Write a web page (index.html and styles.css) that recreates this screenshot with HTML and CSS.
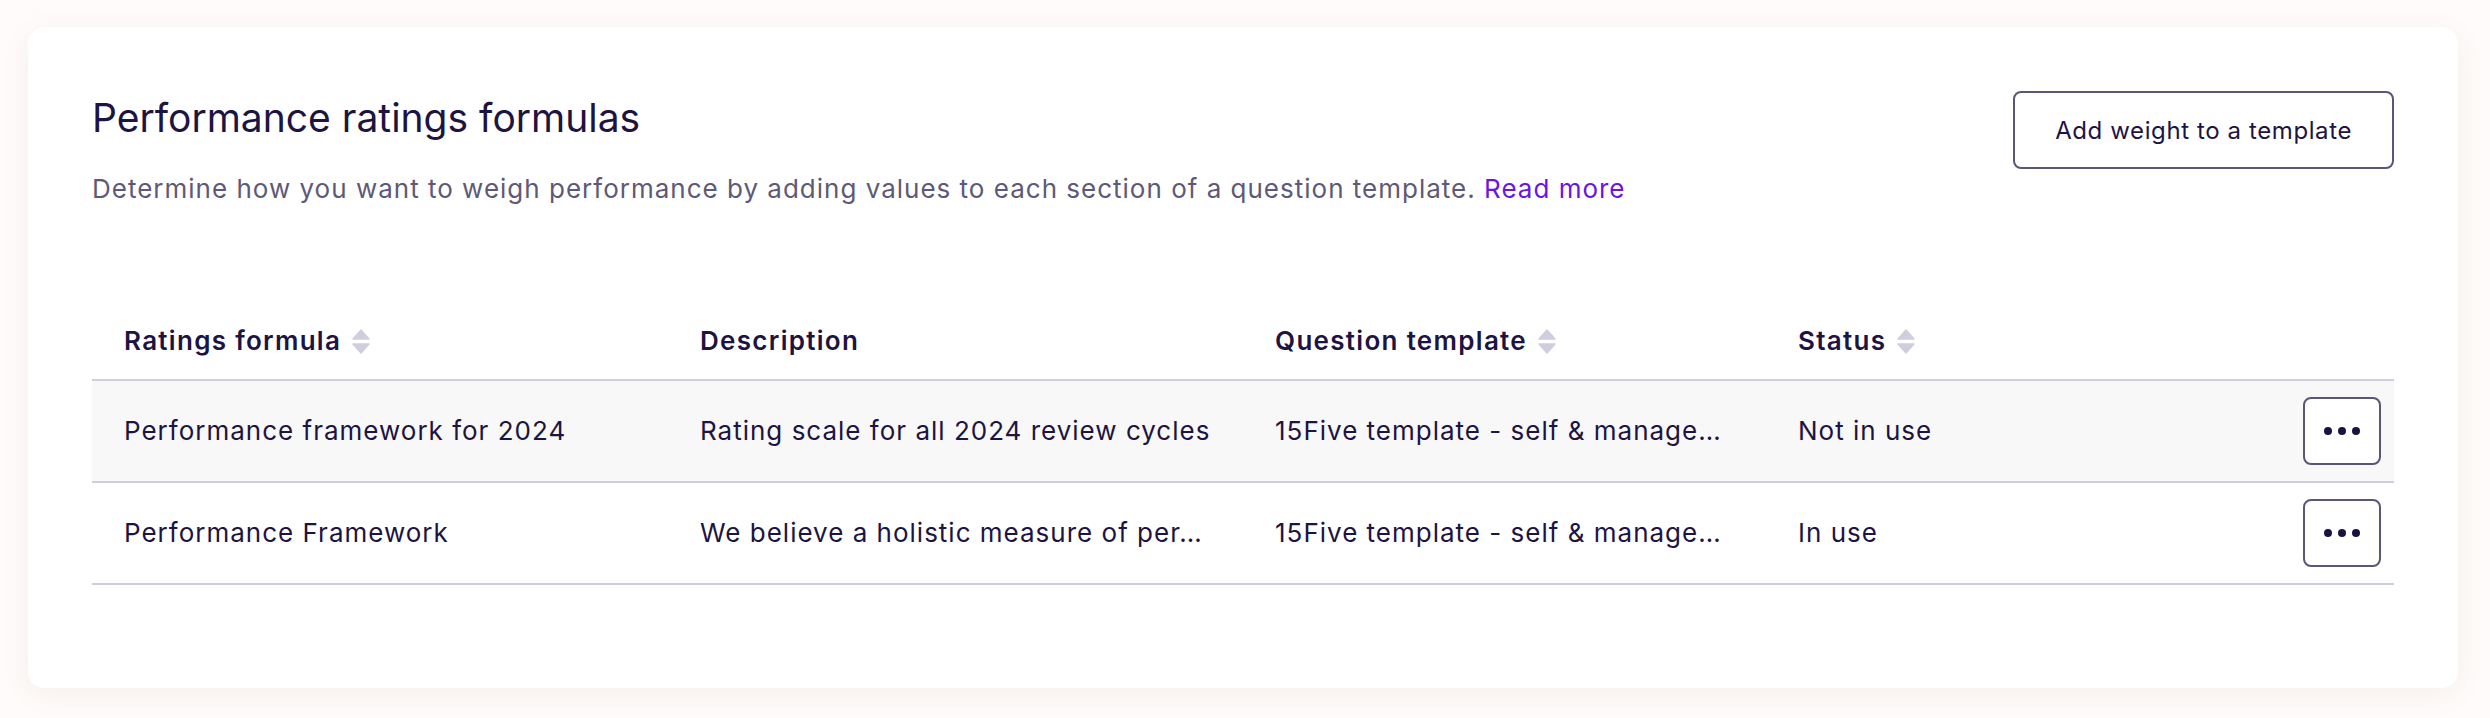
FILE: index.html
```html
<!DOCTYPE html>
<html lang="en">
<head>
    <meta charset="UTF-8">
    <meta name="viewport" content="width=device-width, initial-scale=1.0">
    <title>Performance ratings formulas</title>
    <link rel="stylesheet" href="styles.css">
</head>
<body>
    <div class="card">
        <div class="card-head">
            <div>
                <h1>Performance ratings formulas</h1>
                <p class="intro">Determine how you want to weigh performance by adding values to each section of a question template. <a href="#">Read more</a></p>
            </div>
            <button class="btn-outline">Add weight to a template</button>
        </div>

        <table class="formulas">
            <colgroup>
                <col class="col-name">
                <col class="col-desc">
                <col class="col-template">
                <col class="col-status">
                <col class="col-actions">
            </colgroup>
            <thead>
                <tr>
                    <th>Ratings formula <svg class="sort" width="18" height="25" viewBox="0 0 18 25"><path d="M9 1 L17 10 H1 Z"/><path d="M1 15 H17 L9 24 Z"/></svg></th>
                    <th>Description</th>
                    <th>Question template <svg class="sort" width="18" height="25" viewBox="0 0 18 25"><path d="M9 1 L17 10 H1 Z"/><path d="M1 15 H17 L9 24 Z"/></svg></th>
                    <th>Status <svg class="sort" width="18" height="25" viewBox="0 0 18 25"><path d="M9 1 L17 10 H1 Z"/><path d="M1 15 H17 L9 24 Z"/></svg></th>
                    <th></th>
                </tr>
            </thead>
            <tbody>
                <tr class="shaded">
                    <td>Performance framework for 2024</td>
                    <td>Rating scale for all 2024 review cycles</td>
                    <td>15Five template - self &amp; manage…</td>
                    <td>Not in use</td>
                    <td class="actions">
                        <button class="btn-more" aria-label="More">
                            <svg width="38" height="10" viewBox="0 0 38 10"><circle cx="5" cy="5" r="4"/><circle cx="19" cy="5" r="4"/><circle cx="33" cy="5" r="4"/></svg>
                        </button>
                    </td>
                </tr>
                <tr>
                    <td>Performance Framework</td>
                    <td>We believe a holistic measure of per…</td>
                    <td>15Five template - self &amp; manage…</td>
                    <td>In use</td>
                    <td class="actions">
                        <button class="btn-more" aria-label="More">
                            <svg width="38" height="10" viewBox="0 0 38 10"><circle cx="5" cy="5" r="4"/><circle cx="19" cy="5" r="4"/><circle cx="33" cy="5" r="4"/></svg>
                        </button>
                    </td>
                </tr>
            </tbody>
        </table>
    </div>
</body>
</html>
```

FILE: styles.css
```css
body {
    margin: 0;
    background: #fefbfa;
    font-family: Inter, "Noto Sans", sans-serif;
    color: #1d1442;
}
.card {
    margin: 27px 32px 30px 28px;
    padding: 64px;
    background: #ffffff;
    border-radius: 16px;
    box-shadow: 0 6px 28px rgba(150, 100, 80, 0.08);
}
.card-head {
    display: flex;
    justify-content: space-between;
    align-items: flex-start;
}
h1 {
    margin: 3px 0 0;
    font-size: 39px;
    line-height: 48px;
    font-weight: 400;
}
.intro {
    margin: 29px 0 0;
    font-size: 26px;
    line-height: 36px;
    letter-spacing: 1px;
    color: #5e5978;
}
.intro a {
    color: #6c14e6;
    text-decoration: none;
}
.btn-outline {
    height: 78px;
    padding: 0 40px;
    background: #fff;
    border: 2px solid #5b5677;
    border-radius: 8px;
    font-family: inherit;
    font-size: 24px;
    letter-spacing: 0.6px;
    color: #1d1442;
    cursor: pointer;
}
.formulas {
    width: 100%;
    margin: 92px 0 39px;
    border-collapse: collapse;
    table-layout: fixed;
}
.col-name { width: 576px; }
.col-desc { width: 575px; }
.col-template { width: 523px; }
.col-status { width: 508px; }
.formulas th {
    padding: 24px 32px 20px;
    text-align: left;
    font-size: 26px;
    line-height: 36px;
    font-weight: 600;
    letter-spacing: 1.3px;
    white-space: nowrap;
    border-bottom: 2px solid #d1cedb;
}
.sort {
    margin-left: 3px;
    vertical-align: -4px;
    fill: #d0cddf;
    stroke: #d0cddf;
    stroke-width: 1.5;
    stroke-linejoin: round;
}
.formulas td {
    padding: 16px 32px;
    height: 68px;
    font-size: 26px;
    line-height: 36px;
    letter-spacing: 1px;
    white-space: nowrap;
    overflow: hidden;
    text-overflow: ellipsis;
    border-bottom: 2px solid #d1cedb;
}
.formulas tr.shaded td {
    background: #f8f8f8;
}
.formulas td.actions {
    padding: 16px 13px 16px 0;
    text-align: right;
}
.btn-more {
    width: 78px;
    height: 68px;
    padding: 0;
    background: #fff;
    border: 2px solid #5b5677;
    border-radius: 8px;
    cursor: pointer;
    vertical-align: middle;
}
.btn-more svg {
    display: block;
    margin: 0 auto;
    fill: #1d1142;
}
```
